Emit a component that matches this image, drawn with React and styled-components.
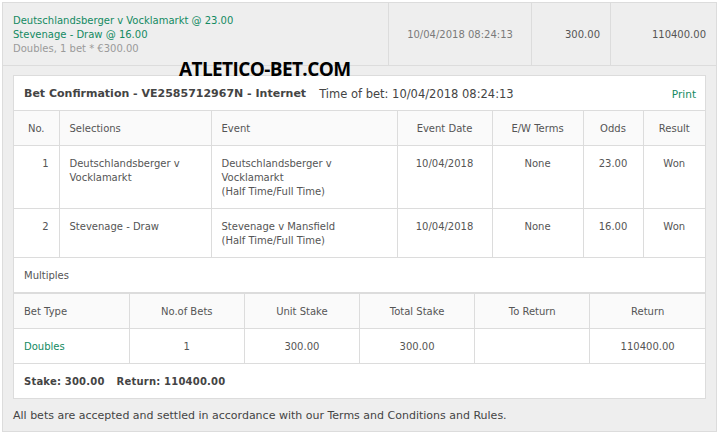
import styled, { createGlobalStyle } from "styled-components";

const GlobalStyle = createGlobalStyle`
  html, body {
    margin: 0;
    padding: 0;
    background: #fff;
  }
  body {
    font-family: "DejaVu Sans", Verdana, sans-serif;
    font-size: 10px;
    color: #444;
  }
`;

const Wrapper = styled.div`
  position: relative;
  margin: 2px 0 0 2px;
  width: 715px;
  height: 430px;
  box-sizing: border-box;
  border: 1px solid #dcdcdc;
  background: #eeeeee;
`;

const SummaryRow = styled.div`
  display: grid;
  grid-template-columns: 386px 143px 79px 1fr;
  border-bottom: 1px solid #dcdcdc;
  line-height: 14px;
`;

const SummaryCell = styled.div`
  padding: 11px 10px 9px;
  min-height: 42px;
  border-right: ${({ $last }) => ($last ? "none" : "1px solid #dcdcdc")};
  display: flex;
  flex-direction: column;
  justify-content: ${({ $middle }) => ($middle ? "center" : "flex-start")};
  align-items: ${({ $align }) =>
    $align === "right" ? "flex-end" : $align === "center" ? "center" : "flex-start"};
  color: ${({ $muted }) => ($muted ? "#7a7a7a" : "#555")};
`;

const Pick = styled.div`
  color: ${({ $muted }) => ($muted ? "#9a9a9a" : "#138a62")};
`;

const Body = styled.div`
  padding: 9px 10px 0 10px;
`;

const Panel = styled.div`
  background: #fff;
  border: 1px solid #dcdcdc;
`;

const PanelHeader = styled.div`
  display: flex;
  align-items: center;
  height: 34px;
  padding: 1px 9px 0 10px;
  box-sizing: border-box;
  font-size: 11.5px;
  color: #444;
`;

const Title = styled.span`
  font-weight: bold;
  font-size: 11px;
  margin-right: 13px;
`;

const PrintLink = styled.a`
  margin-left: auto;
  font-size: 10.5px;
  color: #138a62;
  text-decoration: none;
`;

const Table = styled.table`
  width: 100%;
  border-collapse: collapse;
  table-layout: fixed;
  line-height: 14px;
`;

const Th = styled.th`
  font-weight: normal;
  background: #fafafa;
  color: #555;
  text-align: ${({ $align }) => $align || "center"};
  padding: 11px 10px 9px;
  border: 1px solid #dcdcdc;
  &:first-child { border-left: none; }
  &:last-child { border-right: none; }
`;

const Td = styled.td`
  vertical-align: top;
  text-align: ${({ $align }) => $align || "center"};
  padding: 11px 10px 9px;
  border: 1px solid #dcdcdc;
  color: ${({ $green }) => ($green ? "#138a62" : "#555")};
  &:first-child { border-left: none; }
  &:last-child { border-right: none; }
`;

const TotalsCell = styled(Td)`
  border-bottom: none;
  font-weight: bold;
  letter-spacing: 0.2px;
  color: #444;
`;

const TotalsGap = styled.span`
  display: inline-block;
  width: 12px;
`;

const Footer = styled.div`
  padding: 10px 10px;
  line-height: 14px;
  font-size: 11px;
  color: #444;
`;

const Watermark = styled.div`
  position: absolute;
  left: 176px;
  top: 53px;
  font-family: "Open Sans", "Liberation Sans", sans-serif;
  font-weight: bold;
  font-size: 19px;
  letter-spacing: -0.6px;
  color: #000;
`;

const selections = [
  {
    no: 1,
    sel: ["Deutschlandsberger v", "Vocklamarkt"],
    event: ["Deutschlandsberger v", "Vocklamarkt", "(Half Time/Full Time)"],
    date: "10/04/2018",
    ew: "None",
    odds: "23.00",
    result: "Won",
  },
  {
    no: 2,
    sel: ["Stevenage - Draw"],
    event: ["Stevenage v Mansfield", "(Half Time/Full Time)"],
    date: "10/04/2018",
    ew: "None",
    odds: "16.00",
    result: "Won",
  },
];

const Lines = ({ lines }) =>
  lines.map((l, i) => (
    <span key={i}>
      {l}
      {i < lines.length - 1 && <br />}
    </span>
  ));

export default function App() {
  return (
    <>
      <GlobalStyle />
      <Wrapper>
        <SummaryRow>
          <SummaryCell>
            <Pick>Deutschlandsberger v Vocklamarkt @ 23.00</Pick>
            <Pick>Stevenage - Draw @ 16.00</Pick>
            <Pick $muted>Doubles, 1 bet * €300.00</Pick>
          </SummaryCell>
          <SummaryCell $middle $align="center" $muted>
            10/04/2018 08:24:13
          </SummaryCell>
          <SummaryCell $middle $align="right">
            300.00
          </SummaryCell>
          <SummaryCell $middle $align="right" $last>
            110400.00
          </SummaryCell>
        </SummaryRow>
        <Body>
          <Panel>
            <PanelHeader>
              <Title>Bet Confirmation - VE2585712967N - Internet</Title>
              <span>Time of bet: 10/04/2018 08:24:13</span>
              <PrintLink href="#">Print</PrintLink>
            </PanelHeader>
            <Table>
              <colgroup>
                <col style={{ width: 45 }} />
                <col style={{ width: 152 }} />
                <col style={{ width: 186 }} />
                <col style={{ width: 95 }} />
                <col style={{ width: 91 }} />
                <col style={{ width: 60 }} />
                <col />
              </colgroup>
              <thead>
                <tr>
                  <Th>No.</Th>
                  <Th $align="left">Selections</Th>
                  <Th $align="left">Event</Th>
                  <Th>Event Date</Th>
                  <Th>E/W Terms</Th>
                  <Th>Odds</Th>
                  <Th>Result</Th>
                </tr>
              </thead>
              <tbody>
                {selections.map((s) => (
                  <tr key={s.no}>
                    <Td $align="right">{s.no}</Td>
                    <Td $align="left">
                      <Lines lines={s.sel} />
                    </Td>
                    <Td $align="left">
                      <Lines lines={s.event} />
                    </Td>
                    <Td>{s.date}</Td>
                    <Td>{s.ew}</Td>
                    <Td>{s.odds}</Td>
                    <Td>{s.result}</Td>
                  </tr>
                ))}
                <tr>
                  <Td $align="left" colSpan={7}>
                    Multiples
                  </Td>
                </tr>
              </tbody>
            </Table>
            <Table>
              <thead>
                <tr>
                  <Th $align="left">Bet Type</Th>
                  <Th>No.of Bets</Th>
                  <Th>Unit Stake</Th>
                  <Th>Total Stake</Th>
                  <Th>To Return</Th>
                  <Th>Return</Th>
                </tr>
              </thead>
              <tbody>
                <tr>
                  <Td $align="left" $green>
                    Doubles
                  </Td>
                  <Td>1</Td>
                  <Td>300.00</Td>
                  <Td>300.00</Td>
                  <Td></Td>
                  <Td>110400.00</Td>
                </tr>
                <tr>
                  <TotalsCell $align="left" colSpan={6}>
                    Stake: 300.00
                    <TotalsGap />
                    Return: 110400.00
                  </TotalsCell>
                </tr>
              </tbody>
            </Table>
          </Panel>
        </Body>
        <Footer>
          All bets are accepted and settled in accordance with our Terms and
          Conditions and Rules.
        </Footer>
        <Watermark>ATLETICO-BET.COM</Watermark>
      </Wrapper>
    </>
  );
}
